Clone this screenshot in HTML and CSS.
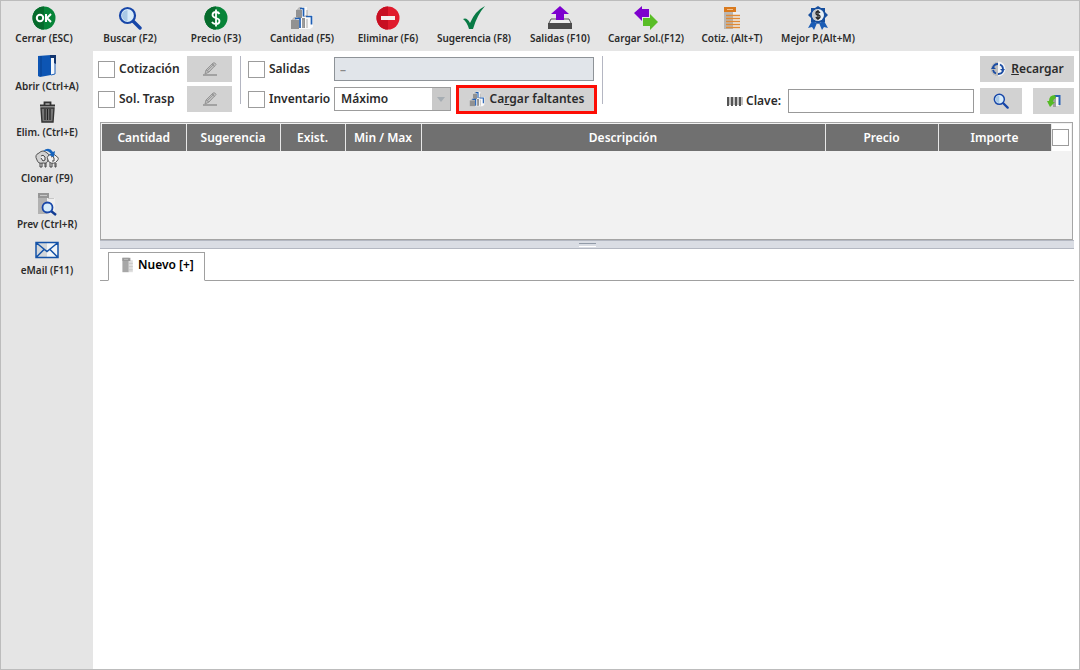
FILE: index.html
```html
<!DOCTYPE html>
<html lang="es">
<head>
<meta charset="utf-8">
<title>Compras</title>
<link rel="stylesheet" href="styles.css">
</head>
<body>
<svg class="defs" aria-hidden="true">
  <defs>
    <symbol id="search" viewBox="0 0 24 24">
      <path d="M15 15l7 7" stroke="#1746a8" stroke-width="3.4" stroke-linecap="round"/>
      <circle cx="9.500" cy="9.500" r="7.500" fill="#d8ecfa" stroke="#1746a8" stroke-width="2.200"/>
      <path d="M9.500 4a5.500 5.500 0 0 0 0 11z" fill="#a9c9e6"/>
    </symbol>
    <symbol id="boxes" viewBox="0 0 24 24">
      <path d="M6 3l3-2h8v12H6zM1 13l3-2h9v12H1zM12 11l3-2h8v12l-3 2h-8z" fill="#fafafa"/>
      <path d="M6 4h6v8H6zM1 14h8v9H1zM12 12h3v10h-3z" fill="#929292"/>
      <path d="M6 4l3-3h3l-1 3zM1 14l3-3h4l-2 3zM13 11l3-2h2l-1 2z" fill="#bcbcbc"/>
      <path d="M10 2.500h3.500v8M5 12.500h5v9.500M16 10.500h5.500v8" fill="none" stroke="#1f5fb5" stroke-width="1.700"/>
      <path d="M17 4v6M13 14v8M17 13v9" stroke="#aaa"/>
    </symbol>
    <symbol id="pencil" viewBox="0 0 18 16">
      <path d="M2 14h14" stroke="#929292" stroke-width="1.500"/>
      <path d="M4 13l1-4 7-7q2-1 3 1.500L8 11z" fill="#c1c1c1" stroke="#949494"/>
      <path d="M6 10l7-7M11 3l3 3M5 9l3 2" stroke="#999"/>
    </symbol>
    <symbol id="doc" viewBox="0 0 16 20">
      <path d="M1 1h8v18H1z" fill="#a7a7a7"/><path d="M9 4h5v15H9z" fill="#dedede"/>
      <path d="M1 1h10v4H1z" fill="#999"/><path d="M3 3h5M9 8h5M9 12h5M9 16h5" stroke="#c4c4c4"/>
    </symbol>
  </defs>
</svg>
<div class="app">
  <nav class="topbar" aria-label="Acciones">
    <button class="tool"><svg class="icon" viewBox="0 0 24 24"><circle cx="12" cy="12" r="11.500" fill="#078438"/><path d="M12 .5a11.500 11.500 0 0 0 0 23z" fill="#066b2c"/><circle cx="8" cy="12" r="3.200" fill="none" stroke="#fff" stroke-width="2"/><path d="M14 8v8M19 8l-4 4 4 4" fill="none" stroke="#fff" stroke-width="2"/></svg><span>Cerrar (ESC)</span></button>
    <button class="tool"><svg class="icon"><use href="#search"/></svg><span>Buscar (F2)</span></button>
    <button class="tool"><svg class="icon" viewBox="0 0 24 24"><circle cx="12" cy="12" r="11.500" fill="#078438"/><path d="M12 .5a11.500 11.500 0 0 0 0 23z" fill="#066b2c"/><path d="M15.500 8q-1-2-3.500-2-3.500 0-3.500 3 0 2 3.500 3t3.500 3q0 3-3.500 3-3 0-4-2M12 3.500v17" fill="none" stroke="#fff" stroke-width="1.800"/></svg><span>Precio (F3)</span></button>
    <button class="tool"><svg class="icon"><use href="#boxes"/></svg><span>Cantidad (F5)</span></button>
    <button class="tool"><svg class="icon" viewBox="0 0 24 24"><circle cx="12" cy="12" r="11.500" fill="#e01b2d"/><path d="M12 .5a11.500 11.500 0 0 0 0 23z" fill="#c70f22"/><path d="M5 10h14v4H5z" fill="#f4efef"/></svg><span>Eliminar (F6)</span></button>
    <button class="tool"><svg class="icon" viewBox="0 0 24 24"><path d="M1 13q4-2 7 4Q13 5 23 0 15 9 11 23H7Q5 16 1 13z" fill="#087a45"/></svg><span>Sugerencia (F8)</span></button>
    <button class="tool"><svg class="icon" viewBox="0 0 24 24"><path d="M1 17l2-4h18l2 4" fill="#eee" stroke="#555"/><path d="M0 17h24v6H0z" fill="#4b4b4b"/><path d="M12 0l9 8h-5v6H8V8H3z" fill="#7d00ce"/></svg><span>Salidas (F10)</span></button>
    <button class="tool"><svg class="icon" viewBox="0 0 24 24"><path d="M0 7l8-7v3h7v8H8v4z" fill="#7d00ce"/><path d="M24 16l-8-8v4H9v8h7v4z" fill="#59bd27"/></svg><span>Cargar Sol.(F12)</span></button>
    <button class="tool"><svg class="icon" viewBox="0 0 24 24"><path d="M4 1h9v22H4z" fill="#b9b6b3"/><path d="M13 6h7v17h-7z" fill="#eee"/><path d="M4 1h12v5H4z" fill="#d97a1e"/><path d="M7 3.500h6" stroke="#f5c08a"/><path d="M6 9.500h14M6 12.500h14M6 15.500h14M6 18.500h14M6 21.500h14" stroke="#e08a35" stroke-width="1.500"/></svg><span>Cotiz. (Alt+T)</span></button>
    <button class="tool"><svg class="icon" viewBox="0 0 24 24"><path d="M6 15l-4 7 4-1 2 3 3-7zM18 15l4 7-4-1-2 3-3-7z" fill="#1c5db5"/><path d="M12 0l3 2 4 0 0 4 3 3-3 3 0 4-4 0-3 2-3-2-4 0 0-4-3-3 3-3 0-4 4 0z" fill="#174f9e"/><circle cx="12" cy="9" r="6" fill="#e8f0f6"/><path d="M12 3a6 6 0 0 0 0 12z" fill="#c4c8cc"/><path d="M14 7q-1-1.500-2-1.500-2 0-2 1.800t2 1.700 2 1.700-2 1.800q-1.500 0-2-1.500M12 4v10" fill="none" stroke="#222" stroke-width="1.300"/></svg><span>Mejor P.(Alt+M)</span></button>
  </nav>
  <nav class="sidebar" aria-label="Documento">
    <button class="tool"><svg class="icon" viewBox="0 0 24 24"><path d="M3 2l13-1v20L5 23l-2-1z" fill="#0d55b3"/><path d="M6 2v20" stroke="#08418c"/><path d="M16 3h4v18h-4z" fill="#f4f8fc"/><path d="M16 21l4-1V9" fill="none" stroke="#1c5db5"/><path d="M15 1h6v9l-2-1V4h-4z" fill="#12356e"/></svg><span>Abrir (Ctrl+A)</span></button>
    <button class="tool"><svg class="icon" viewBox="0 0 24 24"><path d="M5 5.500h15M9.500 5V2.500h6V5" fill="none" stroke="#333" stroke-width="1.800"/><path d="M6 8h13l-1 14H7z" fill="#777" stroke="#333" stroke-width="1.400"/><path d="M10 9v11M12.500 9v11M15 9v11" stroke="#222" stroke-width="1.200"/></svg><span>Elim. (Ctrl+E)</span></button>
    <button class="tool"><svg class="icon" viewBox="0 0 24 24"><g fill="#d2d2d2" stroke="#555"><path d="M2 14Q-1 9 4 7q4-4 8 0 4 2 1 6 0 5-5 4-5 1-6-3z"/><path d="M13 14q-2-3 1-5 5-2 7 1 4 2 1 5-3 4-8 1z" fill="#f2f2f2"/></g><path d="M5 17v4h2v-4M10 17v4h1v-4M15 17v4h2v-4M20 17v4h1v-4" fill="none" stroke="#444"/><path d="M6 10q2-2 4 1v3l-2 1-2-3M16 11q2-2 3 1v3l-2 0" fill="#eee" stroke="#444"/><path d="M8 5q6-5 10 1l2-1-1 6-5-2 2-1q-3-4-8-3z" fill="#1764bd"/></svg><span>Clonar (F9)</span></button>
    <button class="tool"><svg class="icon" viewBox="0 0 24 24"><path d="M3 1h9v21H3z" fill="#b2b2b2"/><path d="M12 6h8v16h-8z" fill="#eee"/><path d="M3 1h11v5H3z" fill="#969696"/><path d="M5 3.500h7M13 6.500h6" stroke="#c8c8c8"/><path d="M16 19l5 4" stroke="#113b92" stroke-width="2.500"/><circle cx="12.500" cy="15.500" r="5" fill="#d7ecfa" stroke="#1746a8" stroke-width="1.800"/></svg><span>Prev (Ctrl+R)</span></button>
    <button class="tool"><svg class="icon" viewBox="0 0 24 24"><path d="M1 4.500h22v15H1z" fill="#f1f5f8"/><path d="M1 4.500h11v15H1z" fill="#d3d7da"/><path d="M1 4.500h22v15H1zM1 4.500l11 9 11-9M1 19.500l8-8M23 19.500l-8-8" fill="none" stroke="#1553a8" stroke-width="1.500"/></svg><span>eMail (F11)</span></button>
  </nav>
  <main class="main">
    <form class="filters">
      <div class="group quote">
        <label class="check"><input type="checkbox">Cotización</label>
        <button type="button" class="btn edit" aria-label="Editar cotización"><svg class="pen"><use href="#pencil"/></svg></button>
        <label class="check"><input type="checkbox">Sol. Trasp</label>
        <button type="button" class="btn edit" aria-label="Editar solicitud"><svg class="pen"><use href="#pencil"/></svg></button>
      </div>
      <div class="group stock">
        <label class="check"><input type="checkbox">Salidas</label>
        <input class="field period" type="text" value="–" aria-label="Periodo de salidas" readonly>
        <label class="check"><input type="checkbox">Inventario</label>
        <div class="pair">
          <span class="combo"><select aria-label="Nivel de inventario"><option>Máximo</option></select><svg class="arrow" viewBox="0 0 8 5"><path d="M0 0h8L4 5z" fill="#a6adb3"/></svg></span>
          <button type="button" class="btn load"><svg class="small"><use href="#boxes"/></svg><span>Ca<u>r</u>gar faltantes</span></button>
        </div>
      </div>
      <div class="lookup">
        <button type="button" class="btn reload"><svg class="small" viewBox="0 0 16 16"><circle cx="8" cy="8" r="7.500" fill="#f1f3f5"/><path d="M8 .5a7.500 7.500 0 0 0 0 15z" fill="#bdbdbd"/><path d="M3 7A5 5 0 0 1 8 3M10 3.500A5 5 0 0 1 13 8M13 10a5 5 0 0 1-5 3M6 12.500A5 5 0 0 1 3 9" fill="none" stroke="#1c4da3" stroke-width="1.800"/><path d="M1 8l2-3 3 3zM15 8l-2 3-3-3z" fill="#1c4da3"/></svg><span><u>R</u>ecargar</span></button>
        <div class="key">
          <label for="clave"><svg class="barcode" viewBox="0 0 16 9"><path d="M1 0v9M5 0v9M9 0v9M13 0v9" stroke="#555" stroke-width="2"/><path d="M3 0v8M7 0v8M11 0v8M15 0v8" stroke="#888"/></svg>Clave:</label>
          <input class="field code" id="clave" type="text">
          <button type="button" class="btn square" aria-label="Buscar clave"><svg class="small"><use href="#search"/></svg></button>
          <button type="button" class="btn square last" aria-label="Importar"><svg class="small" viewBox="0 0 16 16"><path d="M7 4h3v10H7z" fill="#a0a0a0"/><path d="M10 4h3v9h-3z" fill="#f4f4f4"/><path d="M8 3h5.500v9" fill="none" stroke="#2b63b5" stroke-width="2"/><path d="M9 2Q3 2 3 8H1l3 6 5-5H7q0-3 3-4z" fill="#55bb25"/></svg></button>
        </div>
      </div>
    </form>
    <div class="grid">
      <table>
        <colgroup><col class="c-qty"><col class="c-sug"><col class="c-exist"><col class="c-range"><col><col class="c-money"><col class="c-money"><col class="c-all"></colgroup>
        <thead><tr><th>Cantidad</th><th>Sugerencia</th><th>Exist.</th><th>Min / Max</th><th>Descripción</th><th>Precio</th><th>Importe</th><td><input type="checkbox" aria-label="Seleccionar todo"></td></tr></thead>
      </table>
    </div>
    <div class="splitter"><span></span></div>
    <div class="tabs" role="tablist"><button class="tab" role="tab" aria-selected="true"><svg class="small"><use href="#doc"/></svg>Nuevo [+]</button></div>
    <section class="detail"></section>
  </main>
</div>
</body>
</html>
```
FILE: styles.css
```css
* { box-sizing: border-box; }
body {
  margin: 0;
  background: #fff;
  color: #2b2b2b;
  font: 600 12px/18px "Noto Sans", "Open Sans", sans-serif;
}
button, input, select { font: inherit; color: inherit; margin: 0; }
svg { display: block; flex: none; }
.defs { position: absolute; width: 0; height: 0; }
.app {
  display: grid;
  grid-template: 50px 1fr / 92px 1fr;
  min-height: 100vh;
  border: 1px solid #bcbcbc;
}
.topbar {
  grid-column: 1 / -1;
  display: grid;
  grid-template-columns: repeat(10, 86px);
  background: #e5e5e5;
}
.tool {
  display: flex;
  flex-direction: column;
  align-items: center;
  justify-self: center;
  padding: 5px 0 0;
  border: 0;
  background: none;
  font-size: 10px;
  line-height: 16px;
  white-space: nowrap;
}
.icon { width: 24px; height: 24px; }
.topbar .tool { width: 86px; }
.sidebar {
  display: grid;
  grid-auto-rows: 46px;
  align-content: start;
  padding-bottom: 8px;
  background: #e5e5e5;
}
.sidebar .tool { padding-top: 3px; width: 92px; }
.main { display: flex; flex-direction: column; min-width: 0; }
.filters {
  display: flex;
  align-items: flex-start;
  padding: 5px 5px 8px;
}
.group {
  display: grid;
  grid-auto-rows: 26px;
  align-items: center;
  align-content: start;
  row-gap: 4px;
  height: 48px;
  border-right: 1px solid #b4b6c2;
}
.quote { grid-template-columns: 89px 45px; padding-right: 8px; }
.stock { grid-template-columns: 86px 263px; padding: 0 5px 0 7px; }
.check { display: flex; align-items: center; gap: 4px; white-space: nowrap; }
input[type="checkbox"] {
  appearance: none;
  width: 17px;
  height: 17px;
  flex: none;
  border: 1px solid #9c9c9c;
  background: #fff;
}
.btn {
  display: flex;
  align-items: center;
  justify-content: center;
  gap: 5px;
  height: 26px;
  padding: 0;
  border: 0;
  background: #d2d2d2;
  white-space: nowrap;
}
.pen { width: 18px; height: 16px; }
.small { width: 16px; height: 16px; }
.field { height: 24px; padding: 0 5px; border: 1px solid #999; background: #fff; }
.period { width: 260px; background: #e1e5ea; color: #888; border-color: #8e9398; }
.pair { display: flex; align-items: center; gap: 5px; }
.combo { position: relative; width: 117px; }
.combo select {
  display: block;
  appearance: none;
  width: 100%;
  height: 24px;
  padding: 0 6px;
  border: 1px solid #9c9c9c;
  border-radius: 0;
  background: linear-gradient(#c9c9c9, #c9c9c9) right / 18px 100% no-repeat #fff;
}
.arrow { position: absolute; right: 6px; top: 10px; width: 8px; height: 5px; pointer-events: none; }
.load { width: 141px; height: 29px; border: 3px solid #fd0d04; }
.lookup {
  display: flex;
  flex-direction: column;
  align-items: flex-end;
  gap: 6px;
  margin-left: auto;
}
.reload { width: 94px; }
.key { display: flex; align-items: center; }
.key label { display: flex; align-items: center; gap: 3px; margin-right: 7px; }
.barcode { width: 16px; height: 9px; }
.code { width: 186px; margin-right: 6px; }
.square { width: 42px; }
.last { width: 41px; margin-left: 11px; }
.grid {
  height: 118px;
  margin: 0 6px 0 7px;
  padding: 1px;
  border: 1px solid #a5a5a5;
  background: #f2f2f2;
}
.grid table { width: 100%; table-layout: fixed; border-collapse: collapse; }
.grid th {
  height: 27px;
  padding: 0;
  border-right: 1px solid #e8e8e8;
  background: #707070;
  color: #fff;
  font-weight: 600;
}
.grid td { padding: 0; background: #fff; }
.grid td input { display: block; }
.c-qty { width: 84px; }
.c-sug { width: 94px; }
.c-exist { width: 65px; }
.c-range { width: 76px; }
.c-money { width: 113px; }
.c-all { width: 20px; }
.splitter {
  display: flex;
  justify-content: center;
  align-items: center;
  height: 9px;
  margin: 0 5px 0 7px;
  border: solid #b4b8c2;
  border-width: 1px 0;
  background: #dadde4;
}
.splitter span { width: 17px; height: 4px; border-top: 1px solid #929ba8; border-bottom: 1px solid #fff; }
.tabs {
  height: 32px;
  margin: 0 5px 0 7px;
  padding: 3px 0 0 8px;
  border-bottom: 1px solid #a0a0a0;
}
.tab {
  display: flex;
  align-items: center;
  gap: 2px;
  width: 97px;
  height: 29px;
  padding: 0 0 4px 11px;
  border: 1px solid #a0a0a0;
  border-bottom-color: #fff;
  background: #fff;
  color: #000;
  white-space: nowrap;
}
.detail { flex: 1; }
```
